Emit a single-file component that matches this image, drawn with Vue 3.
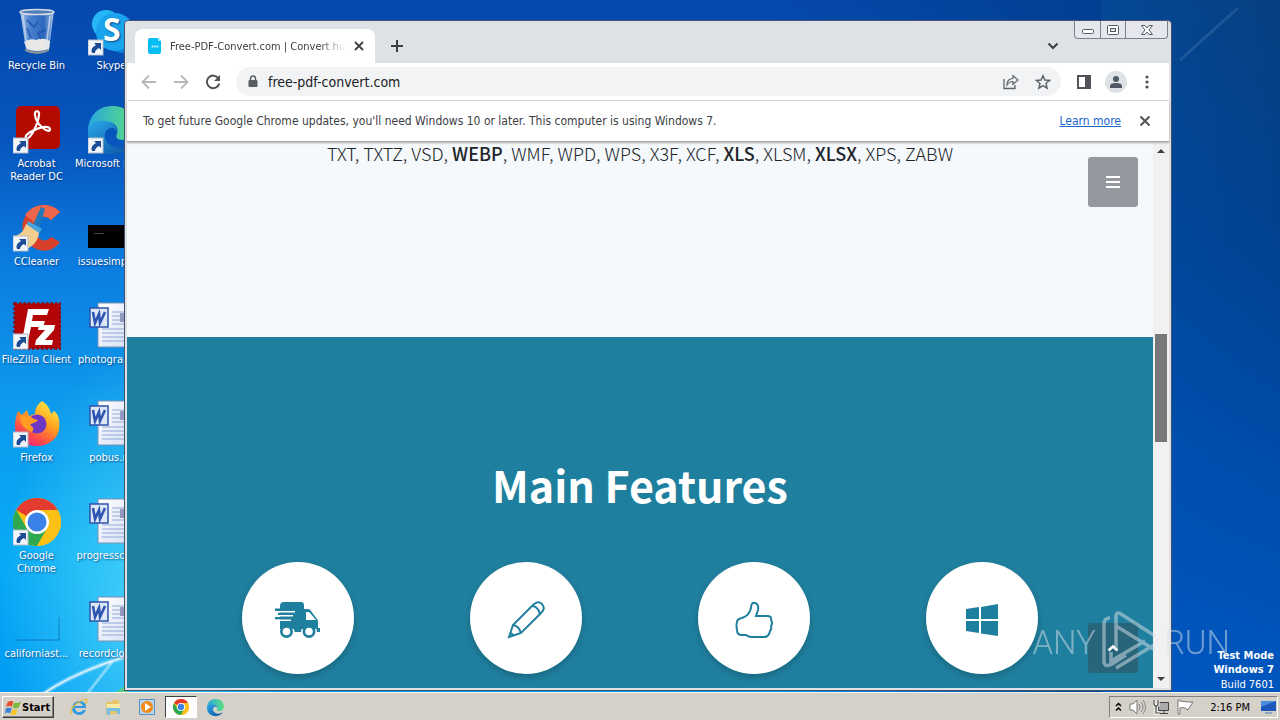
<script setup>
const shortcuts = [
  { label: 'Recycle Bin', kind: 'bin' },
  { label: 'Acrobat Reader DC', kind: 'acrobat', link: true },
  { label: 'CCleaner', kind: 'ccleaner', link: true },
  { label: 'FileZilla Client', kind: 'filezilla', link: true },
  { label: 'Firefox', kind: 'firefox', link: true },
  { label: 'Google Chrome', kind: 'chrome', link: true },
  { label: 'californiast...', kind: 'ghost' },
  { label: 'Skype', kind: 'skype', link: true },
  { label: 'Microsoft Edge', kind: 'edge', link: true, oneLine: true },
  { label: 'issuesimple...', kind: 'black' },
  { label: 'photograph...', kind: 'word' },
  { label: 'pobus.rtf', kind: 'word' },
  { label: 'progressche...', kind: 'word' },
  { label: 'recordcloth...', kind: 'word' },
]
const formats = [
  ['TXT'], ['TXTZ'], ['VSD'], ['WEBP', true], ['WMF'], ['WPD'], ['WPS'], ['X3F'], ['XCF'],
  ['XLS', true], ['XLSM'], ['XLSX', true], ['XPS'], ['ZABW'],
]
const features = ['truck', 'pencil', 'thumb', 'windows']
</script>

<template>
  <div class="screen">
    <svg width="0" height="0" class="defs" aria-hidden="true">
      <defs>
        <linearGradient id="gBin" x1="0" x2="1"><stop offset="0" stop-color="#c3d6ee" /><stop offset=".3" stop-color="#4f86cf" /><stop offset=".7" stop-color="#2f6ac0" /><stop offset="1" stop-color="#bdd2ec" /></linearGradient>
        <linearGradient id="gFox" x1=".8" y1="0" x2=".2" y2="1"><stop offset="0" stop-color="#fff04a" /><stop offset=".4" stop-color="#ffa21f" /><stop offset=".75" stop-color="#fd4a4a" /><stop offset="1" stop-color="#e5208a" /></linearGradient>
        <linearGradient id="gEdgeTop" x1="0" x2="1"><stop offset="0" stop-color="#2aa6e0" /><stop offset="1" stop-color="#5be07c" /></linearGradient>
        <linearGradient id="gEdge" x1="0" x2="1" y2="1"><stop offset="0" stop-color="#2aa8e8" /><stop offset="1" stop-color="#0c4fa0" /></linearGradient>
        <linearGradient id="gPaper" x1="0" y1="0" x2="1" y2="1"><stop offset="0" stop-color="#fff" /><stop offset="1" stop-color="#d5dff4" /></linearGradient>
        <symbol id="chrome" viewBox="0 0 48 48">
          <circle cx="24" cy="24" r="24" fill="#fbc116" />
          <path d="M24 24 3.2 12A24 24 0 0 1 44.8 12L24 12Z" fill="#e33b2e" />
          <path d="M3.2 12A24 24 0 0 0 24 48L34.4 30 24 24 13.6 30Z" fill="#2da94f" />
          <path d="M24 12H44.8A24 24 0 0 1 24 48L34.4 30Z" fill="#fbc116" />
          <circle cx="24" cy="24" r="12" fill="#fff" /><circle cx="24" cy="24" r="9.5" fill="#3b82e8" />
        </symbol>
        <symbol id="edge" viewBox="0 0 48 48">
          <path d="M0 24C1 8 12 0 24 0c15 0 24 10 24 21 0 8-6 13-13 13-6 0-8-3-6-6 2-5-1-12-10-12C10 16 3 20 0 24Z" fill="url(#gEdgeTop)" />
          <path d="M0 24c2-7 10-10 18-9 7 1 11 6 11 11-1-3-4-5-7-4-6 2-7 10-2 15 7 7 18 6 25 0-4 7-12 11-21 11C10 48-1 38 0 24Z" fill="url(#gEdge)" />
        </symbol>
        <symbol id="flag" viewBox="0 0 20 20">
          <path d="M3 4c2-2 5-2 7-1L8 9C6 8 4 8 1 9Z" fill="#e8502c" /><path d="M11 4c2 1 5 1 8-1l-3 7c-2 1-5 1-7 0Z" fill="#7db93c" />
          <path d="M1 11c2-1 5-1 7 0l-2 6c-2-2-4-1-6 0Z" fill="#3b83d9" /><path d="M9 12c2 1 4 1 6 0l-2 6c-2 1-5 1-7 0Z" fill="#f8c52b" />
        </symbol>
      </defs>
    </svg>

    <main class="desktop">
      <svg class="wallpaper" viewBox="0 0 1280 692" preserveAspectRatio="none" aria-hidden="true">
        <g fill="none" stroke="#fff">
          <path d="M43 694Q75 672 128 656" stroke-width="5" opacity=".25" />
          <path d="M43 694Q75 672 128 656" stroke-width="2" opacity=".7" />
          <path d="M87 694 112 662" stroke-width="3" opacity=".4" />
          <path d="M1180 60 1238 8" stroke-width="3" opacity=".1" />
        </g>
        <path d="M116 692 128 684V692Z" fill="#54cc83" />
      </svg>

      <div class="icons">
        <a v-for="s in shortcuts" :key="s.label" class="shortcut" :class="{ 'one-line': s.oneLine }" href="#">
          <svg class="pic" viewBox="0 0 48 48" aria-hidden="true">
            <template v-if="s.kind === 'bin'">
              <path d="M7 3h34l-5 39q-12 5-23 0Z" fill="url(#gBin)" opacity=".9" />
              <path d="M11 34q6-4 12-2 8-3 14 1l-1 8q-12 4-22 0Z" fill="#e8e9e6" />
              <path d="m14 12 7 7 4-5m8 8-8 3 3 6M14 20l4 10" stroke="#1e50ae" stroke-width="2" fill="none" opacity=".7" />
              <path d="m10 7 4 33M37 8l-4 31" stroke="#d6e4f5" stroke-width="1.5" opacity=".7" />
              <ellipse cx="24" cy="4" rx="17" ry="2.6" fill="#507fbd" stroke="#d5dae0" stroke-width="1.5" />
              <path d="M12 41q12 5 24 0v2q-12 6-24 0Z" fill="#8c9297" />
            </template>
            <template v-else-if="s.kind === 'acrobat'">
              <rect x="3" y="0" width="44" height="43" rx="5" fill="#b30b00" />
              <path d="M13 32c-4-4 22-16 24-9 0 6-14-4-15-14-1-5 5-5 4 0-1 9-9 26-13 23Z" fill="none" stroke="#fff" stroke-width="2.200" />
            </template>
            <template v-else-if="s.kind === 'ccleaner'">
              <path d="M47 8 38 16C30 8 22 14 22 24s9 17 16 9l9 5C40 49 26 49 17 41 4 29 9 9 22 3c9-4 18-2 25 5Z" fill="#d9402a" />
              <path d="M47 8 38 16C32 10 24 13 23 20L12 11C20 0 36-3 47 8Z" fill="#f0664a" />
              <path d="m28 3 4 2-6 19-6-3Z" fill="#1f78ba" /><path d="m15 17 14 8-4 6-12-8Z" fill="#49a7dd" />
              <path d="M13 20 26 29c-1 8-6 13-12 16L1 32c7-1 10-6 12-12Z" fill="#f3ce8e" />
            </template>
            <template v-else-if="s.kind === 'filezilla'">
              <rect x="1.5" y="1.5" width="46" height="45" fill="#b30508" stroke="#930307" stroke-width="2.5" stroke-dasharray="2.5 2" />
              <path d="M15 7h21l-2 6H20l-1 6h13l-2 6H18l-3 14H9ZM26 23h16l-1 5-9 10h8l-1 5H22l1-5 9-10h-7Z" fill="#fff" />
            </template>
            <template v-else-if="s.kind === 'firefox'">
              <path d="M29 1c6 4 8 8 9 13l3-3c5 4 6 9 5 18-1 10-11 17-22 17C11 46 2 38 2 27c0-7 1-10 3-16l4 4 5-5 2 6 6-2c0-5 2-9 7-13Z" fill="url(#gFox)" />
              <circle cx="24" cy="24" r="9.500" fill="#7036c6" />
              <path d="m7 15 11 2c2 2 5 2 7 3-2 3-6 3-8 5 4 2 4 5 2 7-8-3-13-9-12-17Z" fill="#ff9d22" />
            </template>
            <use v-else-if="s.kind === 'chrome'" href="#chrome" />
            <g v-else-if="s.kind === 'ghost'">
              <path d="M46 21v23H2" fill="none" stroke="#0869a9" opacity=".7" /><path d="M27 38q3-3 8 0" fill="none" stroke="#3baada" opacity=".5" />
            </g>
            <template v-else-if="s.kind === 'skype'">
              <circle cx="18" cy="16" r="14" fill="#24b6f5" /><circle cx="34" cy="30" r="15" fill="#0a7fd6" /><circle cx="27" cy="24" r="19" fill="#1aa4ee" />
              <text x="15" y="33" class="skype-s">S</text>
            </template>
            <use v-else-if="s.kind === 'edge'" href="#edge" />
            <g v-else-if="s.kind === 'black'"><rect y="21" width="48" height="23" fill="#000" /><path d="M6 29.500h10" stroke="#444" /></g>
            <g v-else>
              <path d="M10 1h33v44H10Z" fill="url(#gPaper)" stroke="#7d90b6" />
              <path d="M24 10h16M24 14h16M24 18h16M24 22h16M14 27h26M14 31h26M14 35h26M14 39h26" stroke="#8fa8d6" />
              <rect x="32" y="11" width="9" height="9" fill="#9199c0" />
              <rect x="2" y="6" width="18" height="19" fill="#dde7f8" stroke="#2d53a8" stroke-width="1.5" />
              <path d="m5 10 2 11 4-9 1 9 5-11" stroke="#2f55b3" stroke-width="2.6" fill="none" />
            </g>
            <g v-if="s.link">
              <rect y="32" width="15" height="15" fill="#f2f5fa" stroke="#b2bccb" />
              <path d="M6 35h7v7l-2-2q-4 2-4 5H4q-2-5 4-8Z" fill="#1d4c97" />
            </g>
          </svg>
          <span>{{ s.label }}</span>
        </a>
      </div>

      <p class="build"><strong>Test Mode</strong><strong>Windows 7</strong><span>Build 7601</span></p>

      <section class="window">
        <header class="tabs">
          <div class="tab">
            <svg width="14" height="16" viewBox="0 0 14 16"><path d="M2 0h8l3 3v11q0 2-2 2H2q-2 0-2-2V2q0-2 2-2Z" fill="#04bdf3" /><path d="m10 0 3 3h-3Z" fill="#9ae6fb" /><path d="M3.500 8.500h7" stroke="#b8eefb" stroke-width="2" stroke-dasharray="2 .6" /></svg>
            <span class="tab-title">Free-PDF-Convert.com | Convert hundreds of formats</span>
            <button class="plain" aria-label="Close tab"><svg width="10" height="10" viewBox="0 0 10 10"><path d="m1 1 8 8M9 1 1 9" stroke="#3c4043" stroke-width="1.800" /></svg></button>
          </div>
          <button class="plain newtab" aria-label="New tab"><svg width="14" height="14" viewBox="0 0 14 14"><path d="M7 1v12M1 7h12" stroke="#3c4043" stroke-width="2" /></svg></button>
          <button class="plain search" aria-label="Search tabs"><svg width="12" height="8" viewBox="0 0 12 8"><path d="m1.500 1.500 4.500 4.500 4.500-4.500" fill="none" stroke="#3c4043" stroke-width="2" /></svg></button>
          <div class="caption">
            <button aria-label="Minimize"><svg class="low" width="12" height="5" viewBox="0 0 12 5"><rect x=".5" y=".5" width="11" height="4" rx="1" fill="#fff" stroke="#555b64" /></svg></button>
            <button aria-label="Restore"><svg width="12" height="10" viewBox="0 0 12 10"><rect x=".5" y=".5" width="11" height="9" rx="1" fill="#fff" stroke="#555b64" /><rect x="3.500" y="3.500" width="5" height="3" fill="#dee1e6" stroke="#555b64" /></svg></button>
            <button aria-label="Close"><svg width="12" height="10" viewBox="0 0 12 10"><path d="M.5.5H4l2 2.500 2-2.500h3.500L8 5l3.500 4.500H8L6 7 4 9.500H.5L4 5Z" fill="#fff" stroke="#555b64" /></svg></button>
          </div>
        </header>

        <nav class="toolbar">
          <button class="plain" aria-label="Back"><svg width="16" height="16" viewBox="0 0 16 16"><path d="M15 8H2M8 1.500 1.500 8 8 14.500" fill="none" stroke="#b6b8bb" stroke-width="1.800" /></svg></button>
          <button class="plain" aria-label="Forward"><svg width="16" height="16" viewBox="0 0 16 16"><path d="M1 8h13M8 1.500 14.500 8 8 14.500" fill="none" stroke="#b6b8bb" stroke-width="1.800" /></svg></button>
          <button class="plain" aria-label="Reload"><svg width="16" height="16" viewBox="0 0 16 16"><path d="M13.500 4.500A6.300 6.300 0 1 0 14.300 9.500" fill="none" stroke="#505357" stroke-width="2" /><path d="M15 1v6H9Z" fill="#505357" /></svg></button>
          <div class="omnibox">
            <svg width="10" height="14" viewBox="0 0 10 14"><rect x=".5" y="5" width="9" height="7" rx="1" fill="#5a5d61" /><path d="M2.500 6V3.500a2.500 2.500 0 0 1 5 0V6" fill="none" stroke="#5a5d61" stroke-width="1.500" /></svg>
            <input value="free-pdf-convert.com" aria-label="Address" />
            <button class="plain" aria-label="Share"><svg width="16" height="16" viewBox="0 0 16 16"><path d="M1 5v9.500h11V11" fill="none" stroke="#5f6368" stroke-width="1.300" /><path d="M4 11c0-4 2-6.500 6-6.500v-3L15 6l-5 4.500v-3C7.500 7.500 5.500 8.500 4 11Z" fill="none" stroke="#5f6368" stroke-width="1.200" /></svg></button>
            <button class="plain" aria-label="Bookmark"><svg width="16" height="16" viewBox="0 0 16 16"><path d="m8 1.800 1.900 4.300 4.700.4-3.600 3 1.100 4.700L8 11.700l-4.100 2.500L5 9.500l-3.600-3 4.700-.4Z" fill="none" stroke="#5f6368" stroke-width="1.500" /></svg></button>
          </div>
          <div class="actions">
            <button class="plain" aria-label="Side panel"><svg width="14" height="14" viewBox="0 0 14 14"><path d="M0 0h14v14H0Z" fill="#505357" /><path d="M2 2h6v10H2Z" fill="#fff" /></svg></button>
            <button class="plain" aria-label="Profile"><svg width="22" height="22" viewBox="0 0 22 22"><circle cx="11" cy="11" r="11" fill="#dee1e6" /><circle cx="11" cy="8" r="3" fill="#505a66" /><path d="M5 17v-2q0-3 6-3t6 3v2Z" fill="#505a66" /></svg></button>
            <button class="plain dots" aria-label="Menu"><svg width="4" height="14" viewBox="0 0 4 14"><g fill="#505357"><circle cx="2" cy="2" r="1.600" /><circle cx="2" cy="7" r="1.600" /><circle cx="2" cy="12" r="1.600" /></g></svg></button>
          </div>
        </nav>

        <div class="infobar">
          <span>To get future Google Chrome updates, you'll need Windows 10 or later. This computer is using Windows 7.</span>
          <a href="#">Learn more</a>
          <button class="plain" aria-label="Dismiss"><svg width="12" height="12" viewBox="0 0 12 12"><path d="m1.500 1.500 9 9m0-9-9 9" stroke="#505357" stroke-width="2" /></svg></button>
        </div>

        <div class="view">
          <div class="page">
            <p class="formats">
              <template v-for="(f, i) in formats" :key="f[0]"><b v-if="f[1]">{{ f[0] }}</b><template v-else>{{ f[0] }}</template>{{ i < formats.length - 1 ? ', ' : '' }}</template>
            </p>
            <section class="features">
              <h2>Main Features</h2>
              <div class="grid">
                <div v-for="f in features" :key="f" class="disc">
                  <svg v-if="f === 'truck'" width="46" height="38" viewBox="0 0 46 38">
                    <path d="M5 8V5q0-4 4-4h17q3 0 3 3v4h4q2 0 3 2l6 8q1 1 1 3v6h2v4H5V8Z" fill="#1f7f9e" />
                    <path d="M0 7.500h8V10H0ZM3 11.500h8V14H3ZM0 16h8v2.500H0Z" fill="#1f7f9e" />
                    <path d="M0 10h20v1.500H0ZM0 14h18v1.500H0ZM0 18.500h16V20H0ZM31 11v8h10l-6-7q-1-1-2-1Z" fill="#fff" />
                    <circle cx="11.500" cy="30.500" r="8" fill="#fff" /><circle cx="34" cy="30.500" r="8" fill="#fff" />
                    <path d="M5 20h36v8H5Z" fill="#1f7f9e" />
                    <circle cx="11.500" cy="30.500" r="6.500" fill="#1f7f9e" /><circle cx="34" cy="30.500" r="6.500" fill="#1f7f9e" />
                    <circle cx="11.500" cy="30.500" r="3.800" fill="#fff" /><circle cx="34" cy="30.500" r="3.800" fill="#fff" />
                  </svg>
                  <svg v-else-if="f === 'pencil'" width="38" height="38" viewBox="0 0 38 38"><path d="M2 36 6 24 26 4q5-5 9-1 4 5-1 9L14 32Zm4-12q6 1 8 8M26 5q5 1 7 8M4 32l3 3" fill="none" stroke="#1f7f9e" stroke-width="2" /></svg>
                  <svg v-else-if="f === 'thumb'" width="38" height="38" viewBox="0 0 38 38"><path d="M2 21q0-3 5-4 7-2 9-10 0-6 4-5 4 1 3 7l-2 6h11q5 0 4 4 2 3 0 6 1 3-1 5-1 6-6 6H17q-4 0-6-2H7q-5 0-5-5-1-5 0-8Z" fill="none" stroke="#1f7f9e" stroke-width="2" /></svg>
                  <svg v-else width="34" height="34" viewBox="0 0 34 34"><path d="M1 6 14 4v12H1Zm15-2L33 1v15H16ZM1 18h13v12L1 28Zm15 0h17v15l-17-2.500Z" fill="#1f7f9e" /></svg>
                </div>
              </div>
            </section>
            <button class="float menu" aria-label="Open menu"><svg width="14" height="14" viewBox="0 0 14 14"><path d="M0 2h14M0 7h14M0 12h14" stroke="#fff" stroke-width="2" /></svg></button>
            <button class="float up" aria-label="Back to top"><svg width="12" height="8" viewBox="0 0 12 8"><path d="m1.500 6.500 4.500-4 4.500 4" fill="none" stroke="#fff" stroke-width="2.500" /></svg></button>
          </div>
          <div class="scroll" aria-hidden="true">
            <svg width="8" height="4" viewBox="0 0 8 4"><path d="m0 4 4-4 4 4Z" fill="#404040" /></svg>
            <div class="track"><i></i></div>
            <svg width="8" height="4" viewBox="0 0 8 4"><path d="m0 0 4 4 4-4Z" fill="#404040" /></svg>
          </div>
        </div>
      </section>

      <div class="brand">
        <span>ANY</span>
        <svg width="58" height="64" viewBox="0 0 58 64" aria-hidden="true"><path d="M15 40V6q0-5 5-2l34 22M15 16l39 24M15 58l38-23M3 54V14q0-6 6-6M10 42v9l34-20M3 52q1 6 8 2L25 45" fill="none" stroke="#d9e4ea" stroke-width="3.500" /></svg>
        <span>RUN</span>
      </div>
    </main>

    <footer class="taskbar">
      <button class="start"><svg width="17" height="17"><use href="#flag" /></svg>Start</button>
      <div class="quick">
        <button aria-label="Internet Explorer"><svg width="18" height="18" viewBox="0 0 18 18"><path d="M16 10H5q1 5 5 4 2 0 3-2h3q-2 5-7 5-7-1-7-7 1-7 8-7 7 1 6 7ZM5 8h8q-1-3-4-3-3 0-4 3Z" fill="#2e9be0" /><path d="M2 16Q-2 13 6 6 16-1 17 2q0 2-2 4" fill="none" stroke="#e9bc37" stroke-width="1.300" /></svg></button>
        <button aria-label="Explorer"><svg width="18" height="18" viewBox="0 0 18 18"><path d="M2 4h6l1-2h6v14H2Z" fill="#e8c667" /><path d="M3 6h13v5H3Z" fill="#fbeaa5" /><path d="M2 10h14v6h-3v-3H6v4H3Z" fill="#77bfe3" /></svg></button>
        <button aria-label="Media player"><svg width="16" height="16" viewBox="0 0 16 16"><path d="M.5.500h15v15H.5Z" fill="#b7d5ed" stroke="#5d91bd" /><circle cx="8" cy="8" r="6" fill="#f28a17" /><path d="m6 4 6 4-6 4Z" fill="#fff" /></svg></button>
        <button class="active" aria-label="Chrome"><svg width="16" height="16"><use href="#chrome" /></svg></button>
        <button aria-label="Edge"><svg width="17" height="17"><use href="#edge" /></svg></button>
      </div>
      <div class="tray">
        <svg width="7" height="10" viewBox="0 0 7 10"><path d="m1 4 2.500-2.500L6 4M1 8.500 3.500 6 6 8.500" fill="none" stroke="#000" stroke-width="1.500" /></svg>
        <svg width="17" height="16" viewBox="0 0 17 16"><path d="M1 5h3l4-4v14l-4-4H1Z" fill="#fff" stroke="#777" /><path d="M10 5q2 3 0 6M12 3q4 5 0 10M14 1q5 7 0 14" fill="none" stroke="#888" /></svg>
        <svg width="17" height="16" viewBox="0 0 17 16"><path d="M5.500 3.500h10v8h-10ZM7 14.500h8M11 12v2" fill="#aaa" stroke="#444" /><path d="M1 1v4q0 2 2 2t2-2V1M3 7v7h4" fill="none" stroke="#fff" stroke-width="3" /><path d="M1 1v4q0 2 2 2t2-2V1M3 7v7h4" fill="none" stroke="#444" stroke-width="1.200" /></svg>
        <svg width="17" height="16" viewBox="0 0 17 16"><path d="M1 1v14h2V9q3-1 5 0l3 2 1-2 4-6h-5L3 2V1Z" fill="#fff" stroke="#777" /></svg>
        <time>2:16 PM</time>
        <svg width="15" height="13" viewBox="0 0 15 13"><path d="M0 0h15v10H0Z" fill="#1d58bb" /><path d="M0 0h15L0 6Z" fill="#4b8bdd" /><path d="M4 11h7v2H4Z" fill="#8fa7c4" /></svg>
      </div>
    </footer>
  </div>
</template>

<style>
body { margin: 0; overflow: hidden; }
</style>

<style scoped>
* { box-sizing: border-box; }
.screen { height: 100vh; display: flex; flex-direction: column; font-family: "DejaVu Sans Condensed", "Noto Sans", sans-serif; font-size: 11px; color: #000; }
.defs { position: absolute; }
.plain { border: 0; padding: 0; background: none; display: grid; place-items: center; }
svg { display: block; flex: none; }
.desktop {
  flex: 1; min-height: 0; position: relative; overflow: hidden;
  background:
    radial-gradient(ellipse 150px 260px at 150px 88%, rgba(100, 230, 250, .7), transparent),
    linear-gradient(90deg, transparent 60%, #003f92 86%),
    linear-gradient(#0548ac 0, #0755bd 20%, #0b7ce0 38%, #0d9aec 58%, #08aaf5 80%, #009bf4 100%);
}
.desktop::before { content: ""; position: absolute; inset: 0 0 0 auto; width: 14%; background: linear-gradient(90deg, rgba(0, 90, 200, .3), transparent), linear-gradient(#064080, #004290 35%, #004ba8 65%, #0056be); }
.wallpaper { position: absolute; width: 100%; height: 100%; }
.icons { position: absolute; inset: 8px auto 0 0; display: grid; grid-template-rows: repeat(7, 98px); grid-auto-flow: column; grid-auto-columns: 75px; }
.shortcut { display: flex; flex-direction: column; align-items: center; gap: 3px; width: 73px; color: #fff; text-align: center; text-decoration: none; line-height: 13px; text-shadow: 1px 1px 2px rgba(0, 30, 90, .7); }
.one-line { white-space: nowrap; }
.pic { width: 48px; height: 48px; }
.skype-s { font: bold 32px "Open Sans", sans-serif; fill: #fff; }
.build { position: absolute; right: 6px; bottom: -1px; margin: 0; display: flex; flex-direction: column; align-items: flex-end; color: #fff; line-height: 14px; }
.build span { line-height: 16px; }

.window { position: absolute; inset: 20px 108px 1px 124px; display: flex; flex-direction: column; border: 1px solid #42536a; border-radius: 4px 4px 0 0; padding: 0 2px 2px; background: #dee1e6; }
.tabs { height: 42px; display: flex; align-items: flex-end; position: relative; flex: none; }
.tab { width: 240px; height: 34px; margin-left: 8px; padding: 0 11px 0 13px; display: flex; align-items: center; background: #fff; border-radius: 8px 8px 0 0; color: #3c4043; }
.tab-title { flex: 1; min-width: 0; margin: 0 8px; overflow: hidden; white-space: nowrap; mask-image: linear-gradient(90deg, #000 85%, transparent); }
.newtab { width: 28px; height: 34px; margin-left: 8px; }
.search { width: 28px; height: 34px; margin: 0 102px 0 auto; }
.caption { position: absolute; top: -1px; right: 1px; display: grid; grid-template-columns: 25px 25px 42px; height: 19px; border: 1px solid #7a818c; border-top-color: #42536a; border-radius: 0 0 4px 4px; background: #e5e7ec; }
.caption button { display: grid; place-items: center; padding: 0; border: 0; background: none; }
.caption button + button { border-left: 1px solid #7a818c; }
.caption .low { align-self: end; margin-bottom: 4px; }
.toolbar { height: 38px; flex: none; display: flex; align-items: center; gap: 16px; padding: 0 20px 0 14px; background: #fff; border-bottom: 1px solid #d5d6d8; }
.omnibox { flex: 1; height: 29px; margin-left: -1px; padding: 0 10px 0 12px; display: flex; align-items: center; gap: 16px; border-radius: 15px; background: #f1f3f4; }
.omnibox input { flex: 1; min-width: 0; margin-left: -6px; padding: 0; border: 0; outline: 0; background: none; color: #202124; font: 14px "DejaVu Sans Condensed", "Noto Sans", sans-serif; }
.actions { display: flex; align-items: center; gap: 14px; }
.dots { margin-left: 4px; }
.infobar { height: 41px; flex: none; display: flex; align-items: center; padding: 0 18px 0 16px; background: #fff; color: #3c4043; font-size: 12px; position: relative; z-index: 1; border-bottom: 1px solid #a4a6a8; box-shadow: 0 1px 2px rgba(0, 0, 0, .3); white-space: nowrap; }
.infobar a { margin: 0 18px 0 auto; color: #1a66cc; }
.view { flex: 1; min-height: 0; display: flex; }
.page { flex: 1; position: relative; overflow: hidden; background: #f5f9fc; font-family: "Noto Sans CJK SC", "Noto Sans CJK JP", sans-serif; }
.formats { margin: 0; min-height: 195px; text-align: center; color: #212529; font-size: 18px; font-weight: 300; line-height: 22px; }
.formats b { font-weight: 500; }
.features { padding: 117px 57px 60px; background: #1f7f9e; }
h2 { margin: 0 0 48px; text-align: center; color: #fff; font-size: 43px; line-height: 60px; font-weight: 700; }
.grid { display: grid; grid-template-columns: repeat(4, 1fr); justify-items: center; }
.disc { width: 112px; height: 112px; display: grid; place-items: center; padding-top: 3px; border-radius: 50%; background: #fff; box-shadow: 0 3px 6px rgba(0, 0, 0, .2); }
.float { position: absolute; right: 15px; width: 50px; height: 50px; padding: 0; border: 0; border-radius: 3px; display: grid; place-items: center; }
.menu { top: 15px; background: #95999f; }
.up { bottom: 15px; background: #28647a; }
.scroll { width: 16px; padding: 7px 0; background: #f1f1f1; display: flex; flex-direction: column; align-items: center; }
.track { flex: 1; width: 12px; display: flex; flex-direction: column; }
.track::before { content: ""; flex: 181; }
.track::after { content: ""; flex: 235; }
.track i { flex: 107; background: #787878; }
.brand { position: absolute; right: 50px; bottom: 18px; display: flex; align-items: center; gap: 5px; opacity: .5; color: #d9e4ea; font: 300 33px Roboto, sans-serif; pointer-events: none; }

.taskbar { height: 28px; flex: none; display: flex; align-items: center; padding: 1px 2px 0; background: #d5d0c8; border-top: 1px solid #f6f4f0; }
.start { height: 22px; width: 52px; padding: 0 2px; display: flex; align-items: center; gap: 0; background: #d5d0c8; border: 1px solid; border-color: #fff #404040 #404040 #fff; box-shadow: inset -1px -1px #808080; font: bold 11px "DejaVu Sans Condensed", sans-serif; }
.quick { display: flex; margin-left: 9px; gap: 2px; }
.quick button { width: 32px; height: 22px; display: grid; place-items: center; padding: 0; border: 1px solid transparent; background: none; }
.quick .active { background: #fff; border-color: #404040 #fff #fff #404040; }
.tray { margin-left: auto; height: 22px; display: flex; align-items: center; gap: 7px; padding: 0 1px 0 5px; border: 1px solid; border-color: #808080 #fff #fff #808080; }
.tray time { margin: 0 4px 0 9px; }
</style>
